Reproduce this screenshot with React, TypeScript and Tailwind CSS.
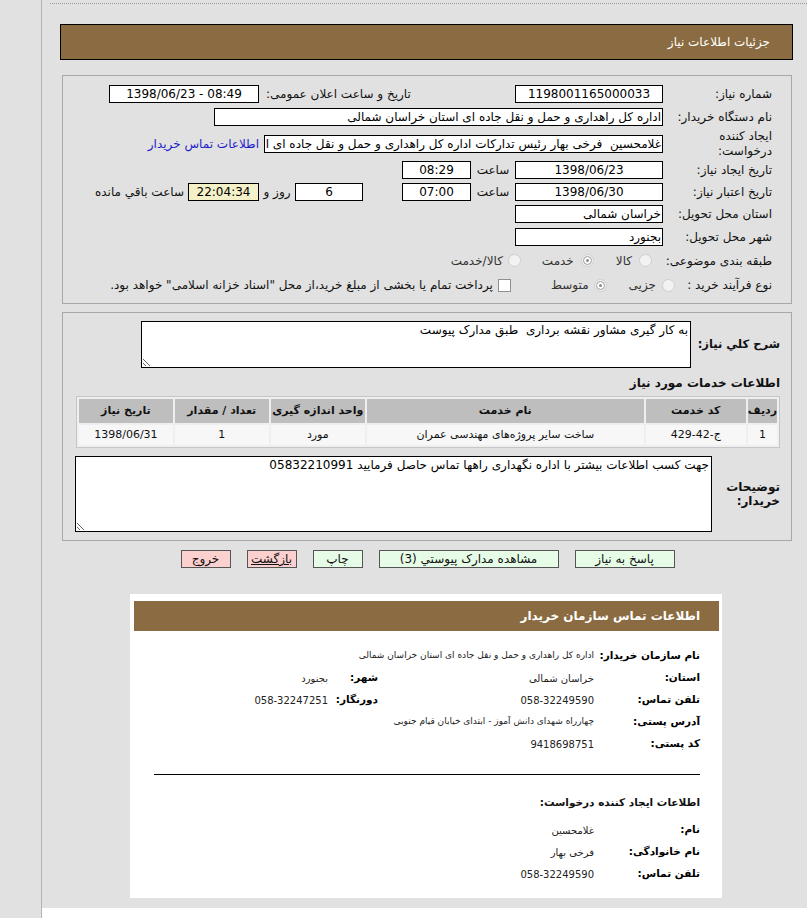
import React from "react";

const F = "font-['Tahoma','DejaVu_Sans',sans-serif]";

function Inp({
  w,
  children,
  right = false,
  yellow = false,
  extra = "",
}: {
  w: string;
  children?: React.ReactNode;
  right?: boolean;
  yellow?: boolean;
  extra?: string;
}) {
  return (
    <div
      className={`${w} ${extra} shrink-0 h-[18px] border border-black ${
        yellow ? "bg-[#f4f0c8]" : "bg-white"
      } ${right ? "text-right pr-[1px]" : "text-center"} text-[12px] leading-[16px] text-black whitespace-nowrap overflow-hidden`}
    >
      {children}
    </div>
  );
}

function Radio({ checked = false }: { checked?: boolean }) {
  return (
    <span className="inline-flex shrink-0 w-[13px] h-[13px] rounded-full border border-[#cfcfcf] bg-[#f2f2f2] items-center justify-center">
      {checked && (
        <span className="inline-flex w-[9px] h-[9px] rounded-full border border-[#9c9c9c] bg-white items-center justify-center">
          <span className="w-[3px] h-[3px] rounded-full bg-[#8a8a8a]" />
        </span>
      )}
    </span>
  );
}

function CardRow({
  label,
  value,
  label2,
  value2,
  small = false,
}: {
  label: string;
  value: string;
  label2?: string;
  value2?: string;
  small?: boolean;
}) {
  return (
    <div className="flex items-center h-[22px] whitespace-nowrap">
      <div className="w-[106px] shrink-0 text-[10.5px] font-bold text-black">{label}</div>
      <div className={`w-[216px] shrink-0 ${small ? "text-[9px]" : "text-[10px]"} text-[#222]`}>{value}</div>
      {label2 && (
        <div className="w-[50px] shrink-0 text-[10.5px] font-bold text-black">{label2}</div>
      )}
      {value2 && <div className="text-[10px] text-[#222]">{value2}</div>}
    </div>
  );
}

export default function App() {
  return (
    <div className={`flex min-h-[918px] bg-white ${F}`}>
      <div className="w-[42px] shrink-0 bg-[#e1e1e1] border-r border-[#b4b4b4]" />
      <div className="flex-1 h-[908px] bg-[#e1e1e1] text-[#111]" dir="rtl">
        <div className="mt-[3px] ml-[8px] border-t border-dotted border-[#9a9a9a]" />
        <div className="mt-[20px] mr-[14px] ml-[18px] h-[36px] bg-[#8b6c42] border border-black flex items-center pr-[22px] text-white text-[12px]">
          جزئیات اطلاعات نیاز
        </div>

        {/* Panel 1 */}
        <div className="mt-[15px] mr-[15px] ml-[20px] h-[229px] border border-[#a8a8a8] pt-[7px] pr-[19px] text-[12px]">
          <div className="flex items-center h-[22px]">
            <div className="w-[109px] shrink-0">شماره نیاز:</div>
            <Inp w="w-[148px]">1198001165000033</Inp>
            <div className="w-[256px] shrink-0 text-left pl-[7px]">تاریخ و ساعت اعلان عمومی:</div>
            <Inp w="w-[150px]">
              <span dir="ltr">1398/06/23 - 08:49</span>
            </Inp>
          </div>
          <div className="flex items-center h-[23px]">
            <div className="w-[109px] shrink-0">نام دستگاه خریدار:</div>
            <Inp w="w-[449px]" right>
              اداره کل راهداری و حمل و نقل جاده ای استان خراسان شمالی
            </Inp>
          </div>
          <div className="flex items-center h-[31px]">
            <div className="w-[109px] shrink-0 leading-[15px]">
              ایجاد کننده
              <br />
              درخواست:
            </div>
            <Inp w="w-[399px]" right>
              غلامحسین&nbsp; فرخی بهار رئیس تدارکات اداره کل راهداری و حمل و نقل جاده ای ا
            </Inp>
            <div className="mr-[5px] text-[#1d1dc9] whitespace-nowrap">اطلاعات تماس خریدار</div>
          </div>
          <div className="flex items-center h-[22px]">
            <div className="w-[109px] shrink-0">تاریخ ایجاد نیاز:</div>
            <Inp w="w-[148px]">1398/06/23</Inp>
            <div className="w-[44px] shrink-0 text-center">ساعت</div>
            <Inp w="w-[69px]">08:29</Inp>
          </div>
          <div className="flex items-center h-[21px]">
            <div className="w-[109px] shrink-0">تاریخ اعتبار نیاز:</div>
            <Inp w="w-[148px]">1398/06/30</Inp>
            <div className="w-[44px] shrink-0 text-center">ساعت</div>
            <Inp w="w-[69px]">07:00</Inp>
            <Inp w="w-[68px]" extra="mr-[39px]">6</Inp>
            <div className="w-[36px] shrink-0 text-center whitespace-nowrap">روز و</div>
            <Inp w="w-[71px]" yellow>22:04:34</Inp>
            <div className="mr-[4px] whitespace-nowrap">ساعت باقي مانده</div>
          </div>
          <div className="flex items-center h-[23px]">
            <div className="w-[109px] shrink-0">استان محل تحویل:</div>
            <Inp w="w-[148px]" right>خراسان شمالی</Inp>
          </div>
          <div className="flex items-center h-[23px]">
            <div className="w-[109px] shrink-0">شهر محل تحویل:</div>
            <Inp w="w-[148px]" right>بجنورد</Inp>
          </div>
          <div className="flex items-center h-[25px]">
            <div className="w-[109px] shrink-0">طبقه بندی موضوعی:</div>
            <span className="mr-[11px] flex"><Radio /></span>
            <span className="mr-[7px] text-[#333]">کالا</span>
            <span className="mr-[22px] flex"><Radio checked /></span>
            <span className="mr-[7px] text-[#333]">خدمت</span>
            <span className="mr-[21px] flex"><Radio /></span>
            <span className="mr-[5px] text-[#333]">کالا/خدمت</span>
          </div>
          <div className="flex items-center h-[24px]">
            <div className="w-[97px] shrink-0">نوع فرآیند خرید :</div>
            <span className="flex"><Radio /></span>
            <span className="mr-[6px] text-[#333]">جزیی</span>
            <span className="mr-[22px] flex"><Radio checked /></span>
            <span className="mr-[5px] text-[#333]">متوسط</span>
            <span className="mr-[40px] flex w-[13px] h-[13px] border border-[#8f8f8f] bg-white" />
            <span className="mr-[5px] whitespace-nowrap">
              پرداخت تمام یا بخشی از مبلغ خرید،از محل "اسناد خزانه اسلامی" خواهد بود.
            </span>
          </div>
        </div>

        {/* Panel 2 */}
        <div className="mt-[8px] mr-[15px] ml-[20px] h-[229px] border border-[#a8a8a8] pt-[8px] pr-[11px]">
          <div className="flex items-center">
            <div className="w-[89px] shrink-0 text-[11.5px] font-bold whitespace-nowrap">شرح کلي نیاز:</div>
            <textarea
              readOnly
              dir="rtl"
              defaultValue="به کار گیری مشاور نقشه برداری  طبق مدارک پیوست"
              className="w-[550px] h-[47px] border border-black bg-white text-[12px] leading-[15px] px-[2px] py-[1px] outline-none text-black"
            />
          </div>
          <div className="mt-[6px] h-[18px] text-[12px] font-bold leading-[18px]">اطلاعات خدمات مورد نیاز</div>
          <table className="mt-[4px] w-[704px] border border-[#c6c6c6] border-separate border-spacing-[2px] bg-[#efefef] text-[11px]">
            <thead>
              <tr className="h-[24px]">
                <th className="w-[24px] bg-[#bebebe] font-bold text-[#111]">ردیف</th>
                <th className="w-[100px] bg-[#bebebe] font-bold text-[#111]">کد خدمت</th>
                <th className="w-[277px] bg-[#bebebe] font-bold text-[#111]">نام خدمت</th>
                <th className="w-[94px] bg-[#bebebe] font-bold text-[#111]">واحد اندازه گیری</th>
                <th className="w-[94px] bg-[#bebebe] font-bold text-[#111]">تعداد / مقدار</th>
                <th className="bg-[#bebebe] font-bold text-[#111]">تاریخ نیاز</th>
              </tr>
            </thead>
            <tbody>
              <tr className="h-[20px]">
                <td className="bg-[#f7f7f7] text-center">1</td>
                <td className="bg-[#f7f7f7] text-center">ج-42-429</td>
                <td className="bg-[#f7f7f7] text-center">ساخت سایر پروژه‌های مهندسی عمران</td>
                <td className="bg-[#f7f7f7] text-center">مورد</td>
                <td className="bg-[#f7f7f7] text-center">1</td>
                <td className="bg-[#f7f7f7] text-center">1398/06/31</td>
              </tr>
            </tbody>
          </table>
          <div className="mt-[8px] flex items-center">
            <div className="w-[68px] shrink-0 text-[12px] font-bold leading-[14px]">
              توضیحات
              <br />
              خریدار:
            </div>
            <textarea
              readOnly
              dir="rtl"
              defaultValue="جهت کسب اطلاعات بیشتر با اداره نگهداری راهها تماس حاصل فرمایید 05832210991"
              className="w-[637px] h-[76px] border border-black bg-white text-[12px] leading-[15px] px-[2px] py-[1px] outline-none text-black"
            />
          </div>
        </div>

        {/* Buttons */}
        <div className="mt-[9px] flex justify-center gap-[16px] pl-[6px] text-[12px]">
          <div className="w-[100px] h-[18px] border border-[#555] bg-[#e6fce6] text-center leading-[16px]">پاسخ به نیاز</div>
          <div className="w-[180px] h-[18px] border border-[#555] bg-[#e6fce6] text-center leading-[16px]">مشاهده مدارک پیوستي (3)</div>
          <div className="w-[50px] h-[18px] border border-[#555] bg-[#e6fce6] text-center leading-[16px]">چاپ</div>
          <div className="w-[50px] h-[18px] border border-[#555] bg-[#fdd0d0] text-center leading-[16px] underline">بازگشت</div>
          <div className="w-[50px] h-[18px] border border-[#555] bg-[#fdd0d0] text-center leading-[16px]">خروج</div>
        </div>

        {/* Contact card */}
        <div className="mt-[26px] mr-[85px] w-[592px] h-[304px] bg-white pt-[7px]">
          <div className="mr-[3px] ml-[4px] h-[30px] bg-[#8b6c42] flex items-center pr-[19px] text-white text-[12px] font-bold">
            اطلاعات تماس سازمان خریدار
          </div>
          <div className="mt-[14px] pr-[22px]">
            <CardRow small label="نام سازمان خریدار:" value="اداره کل راهداری و حمل و نقل جاده ای استان خراسان شمالی" />
            <CardRow label="استان:" value="خراسان شمالی" label2="شهر:" value2="بجنورد" />
            <CardRow label="تلفن تماس:" value="058-32249590" label2="دورنگار:" value2="058-32247251" />
            <CardRow small label="آدرس پستی:" value="چهارراه شهدای دانش آموز - ابتدای خیابان قیام جنوبی" />
            <CardRow label="کد پستی:" value="9418698751" />
          </div>
          <div className="mt-[19px] mr-[22px] ml-[24px] border-t border-black" />
          <div className="mt-[18px] pr-[22px] h-[18px] text-[10.5px] font-bold leading-[18px]">
            اطلاعات ایجاد کننده درخواست:
          </div>
          <div className="mt-[8px] pr-[22px]">
            <CardRow label="نام:" value="غلامحسین" />
            <CardRow label="نام خانوادگی:" value="فرخی بهار" />
            <CardRow label="تلفن تماس:" value="058-32249590" />
          </div>
        </div>
      </div>
    </div>
  );
}
